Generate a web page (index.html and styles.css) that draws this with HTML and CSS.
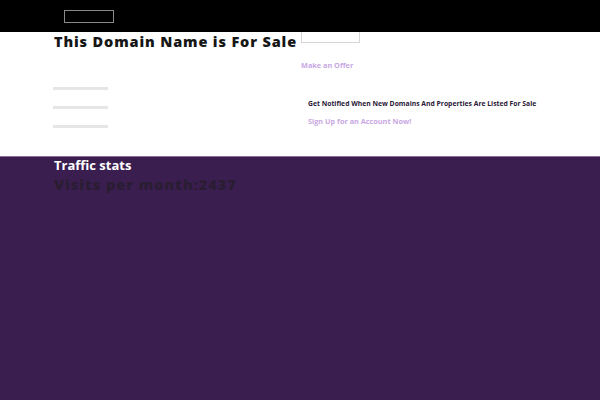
FILE: index.html
```html
<!DOCTYPE html>
<html>
<head>
<meta charset="utf-8">
<link rel="stylesheet" href="styles.css">
</head>
<body>
<header class="topbar">
  <div class="logo-box"></div>
</header>
<section class="sale">
  <div class="col-left">
    <h1 class="title">This Domain Name is For Sale</h1>
    <div class="bars">
      <span class="bar"></span>
      <span class="bar"></span>
      <span class="bar"></span>
    </div>
  </div>
  <div class="col-right">
    <div class="offer-box"></div>
    <a class="link offer">Make an Offer</a>
    <div class="notify">
      <p class="notify-title">Get Notified When New Domains And Properties Are Listed For Sale</p>
      <a class="link signup">Sign Up for an Account Now!</a>
    </div>
  </div>
</section>
<section class="traffic">
  <h2 class="traffic-title">Traffic stats</h2>
  <p class="visits">Visits per month:2437</p>
</section>
</body>
</html>
```

FILE: styles.css
```css
* { box-sizing: border-box; }
html, body { margin: 0; padding: 0; }
body {
  font-family: "Open Sans", "Liberation Sans", sans-serif;
  background: #3a1e4f;
  height: 400px;
  overflow: hidden;
}
.topbar {
  height: 32px;
  background: #000;
  padding: 10px 0 0 64px;
}
.logo-box {
  width: 50px;
  height: 13px;
  border: 1px solid #8a8a8a;
}
.sale {
  background: #fff;
  height: 124px;
  display: flex;
  padding-left: 54px;
}
.col-left {
  width: 247px;
}
.title {
  margin: 0;
  font-size: 14.5px;
  font-weight: 800;
  letter-spacing: 0.86px;
  line-height: 20px;
  color: #161616;
  white-space: nowrap;
}
.bars {
  display: flex;
  flex-direction: column;
  gap: 16px;
  margin-top: 35px;
  margin-left: -1px;
}
.bar {
  display: block;
  width: 55px;
  height: 3px;
  background: #e6e6e6;
  box-shadow: 0 0 1px #f0f0f0;
}
.col-right {
  display: flex;
  flex-direction: column;
}
.offer-box {
  width: 59px;
  height: 11px;
  border: 1px solid #d6d6d6;
  border-top: none;
}
.link {
  font-weight: 700;
  color: #c9a8e4;
  font-size: 7.3px;
  line-height: 10px;
}
.offer {
  margin-top: 17px;
}
.notify {
  padding-left: 7px;
  margin-top: 29px;
}
.notify-title {
  margin: 0;
  font-size: 6.8px;
  line-height: 10px;
  font-weight: 700;
  color: #2a1a38;
  white-space: nowrap;
}
.signup {
  display: block;
  margin-top: 7px;
}
.traffic {
  border-top: 1px solid #8c6c9c;
  padding-left: 54px;
}
.traffic-title {
  margin: 0;
  font-size: 13px;
  line-height: 17px;
  font-weight: 700;
  color: #fff;
}
.visits {
  margin: 0;
  margin-top: 1px;
  font-size: 14.5px;
  font-weight: 800;
  letter-spacing: 1px;
  line-height: 20px;
  color: #2a1d33;
}
```
